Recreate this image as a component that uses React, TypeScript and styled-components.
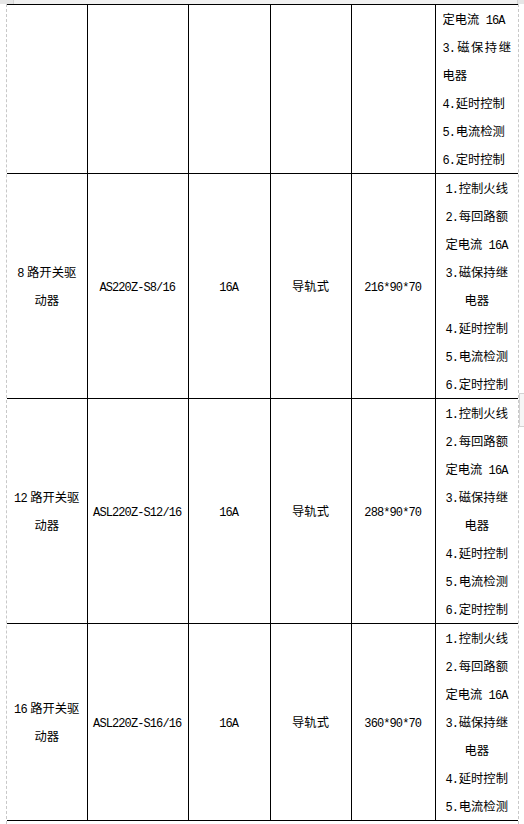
import React from 'react';
import styled, { createGlobalStyle } from 'styled-components';

const Global = createGlobalStyle`
  html, body { margin: 0; padding: 0; background: #fff; }
  body { font-family: "Noto Sans CJK SC", "Noto Sans", sans-serif; color: #000; }
`;

const Screen = styled.div`
  width: 524px;
  height: 824px;
  overflow: hidden;
  display: flex;
  flex-direction: column;
  background: #fff;
`;

const TopBar = styled.div`
  height: 4px;
  flex: none;
  background: #f1f1f1;
  display: flex;
  justify-content: space-between;
`;

const CornerMark = styled.div<{ $side: 'left' | 'right' }>`
  width: ${p => (p.$side === 'left' ? '13px' : '6px')};
  height: 4px;
  background: #e6e6e6;
  ${p => (p.$side === 'left' ? 'border-right: 1px solid #d4d4d4;' : 'border-left: 1px solid #d4d4d4;')}
`;

const Page = styled.div`
  position: relative;
  flex: 1;
  margin-left: 6px;
  width: 511px;
  border-left: 1px dashed #c8c8c8;
  border-right: 1px dashed #c8c8c8;
`;

const RowHandle = styled.div`
  position: absolute;
  right: -7px;
  top: 389px;
  width: 5px;
  height: 32px;
  border: 1px solid #d2d2d2;
  border-right: none;
  background: #f6f6f6;
`;

const Table = styled.table`
  width: 511px;
  border-collapse: collapse;
  table-layout: fixed;
  font-size: 12.3px;
  line-height: 28px;
`;

const Row = styled.tr`
  & > td:nth-child(1) {
    padding: 0 6px;
  }
  & > td:nth-child(2) {
    padding: 0 3px;
  }
`;

const Cell = styled.td<{ $justify?: boolean }>`
  border: 1px solid #000;
  padding: 0 7px;
  text-align: ${p => (p.$justify ? 'justify' : 'center')};
  text-align-last: ${p => (p.$justify ? 'left' : 'center')};
  vertical-align: middle;
  word-break: break-all;
  &:first-child { border-left: none; }
  &:last-child { border-right: none; }
`;

const Lat = styled.span<{ $gap?: boolean }>`
  font-family: "Liberation Mono", "DejaVu Sans Mono", monospace;
  font-size: 12px;
  letter-spacing: -0.9px;
  line-height: 1;
  white-space: pre;
  margin-right: ${p => (p.$gap ? '3.5px' : '0.6px')};
`;

type RowData = {
  name: string;
  model: string;
  current: string;
  mount: string;
  size: string;
  features: string[];
  cont?: boolean;
};

const allFeatures = ['1.控制火线', '2.每回路额定电流 16A', '3.磁保持继电器', '4.延时控制', '5.电流检测', '6.定时控制'];

const rows: RowData[] = [
  { name: '', model: '', current: '', mount: '', size: '', features: ['定电流 16A', '3.磁保持继电器', '4.延时控制', '5.电流检测', '6.定时控制'], cont: true },
  { name: '8路开关驱动器', model: 'AS220Z-S8/16', current: '16A', mount: '导轨式', size: '216*90*70', features: allFeatures },
  { name: '12路开关驱动器', model: 'ASL220Z-S12/16', current: '16A', mount: '导轨式', size: '288*90*70', features: allFeatures },
  { name: '16路开关驱动器', model: 'ASL220Z-S16/16', current: '16A', mount: '导轨式', size: '360*90*70', features: allFeatures.slice(0, 5) },
];

function mixed(text: string) {
  const parts = text.split(/([\x20-\x7e]+)/).filter(Boolean);
  return parts.map((part, i) => {
    if (/^[\x20-\x7e]+$/.test(part)) {
      const gap = /[0-9A-Za-z]$/.test(part) && i < parts.length - 1;
      return (
        <Lat key={i} $gap={gap}>
          {part}
        </Lat>
      );
    }
    return <React.Fragment key={i}>{part}</React.Fragment>;
  });
}

const widths = [80, 101, 82, 81, 84, 83];

export default function App() {
  return (
    <>
      <Global />
      <Screen>
        <TopBar>
          <CornerMark $side="left" />
          <CornerMark $side="right" />
        </TopBar>
        <Page>
          <Table>
            <colgroup>
              {widths.map((w, i) => (
                <col key={i} style={{ width: w }} />
              ))}
            </colgroup>
            <tbody>
              {rows.map((r, ri) => (
                <Row key={ri}>
                  <Cell>{mixed(r.name)}</Cell>
                  <Cell>{mixed(r.model)}</Cell>
                  <Cell>{mixed(r.current)}</Cell>
                  <Cell>{mixed(r.mount)}</Cell>
                  <Cell>{mixed(r.size)}</Cell>
                  <Cell $justify={r.cont}>
                    {r.features.map((f, fi) => (
                      <React.Fragment key={fi}>
                        {fi > 0 && <br />}
                        {mixed(f)}
                      </React.Fragment>
                    ))}
                  </Cell>
                </Row>
              ))}
            </tbody>
          </Table>
          <RowHandle />
        </Page>
      </Screen>
    </>
  );
}
